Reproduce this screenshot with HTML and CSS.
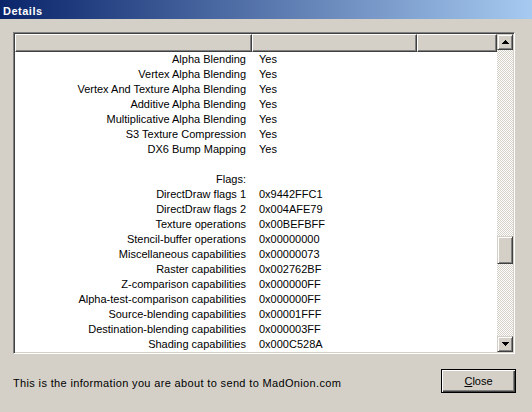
FILE: index.html
```html
<!DOCTYPE html>
<html>
<head>
<meta charset="utf-8">
<title>Details</title>
<link rel="stylesheet" href="styles.css">
</head>
<body>
<div class="window">
  <div class="titlebar"><span class="title">Details</span></div>
  <div class="listbox">
    <div class="listmain">
      <div class="header">
        <div class="hcell c1"></div>
        <div class="hcell c2"></div>
        <div class="hcell c3"></div>
      </div>
      <div class="rows">
        <div class="row"><span class="label">Alpha Blending</span><span class="value">Yes</span></div>
        <div class="row"><span class="label">Vertex Alpha Blending</span><span class="value">Yes</span></div>
        <div class="row"><span class="label">Vertex And Texture Alpha Blending</span><span class="value">Yes</span></div>
        <div class="row"><span class="label">Additive Alpha Blending</span><span class="value">Yes</span></div>
        <div class="row"><span class="label">Multiplicative Alpha Blending</span><span class="value">Yes</span></div>
        <div class="row"><span class="label">S3 Texture Compression</span><span class="value">Yes</span></div>
        <div class="row"><span class="label">DX6 Bump Mapping</span><span class="value">Yes</span></div>
        <div class="row"><span class="label"></span><span class="value"></span></div>
        <div class="row"><span class="label">Flags:</span><span class="value"></span></div>
        <div class="row"><span class="label">DirectDraw flags 1</span><span class="value">0x9442FFC1</span></div>
        <div class="row"><span class="label">DirectDraw flags 2</span><span class="value">0x004AFE79</span></div>
        <div class="row"><span class="label">Texture operations</span><span class="value">0x00BEFBFF</span></div>
        <div class="row"><span class="label">Stencil-buffer operations</span><span class="value">0x00000000</span></div>
        <div class="row"><span class="label">Miscellaneous capabilities</span><span class="value">0x00000073</span></div>
        <div class="row"><span class="label">Raster capabilities</span><span class="value">0x002762BF</span></div>
        <div class="row"><span class="label">Z-comparison capabilities</span><span class="value">0x000000FF</span></div>
        <div class="row"><span class="label">Alpha-test-comparison capabilities</span><span class="value">0x000000FF</span></div>
        <div class="row"><span class="label">Source-blending capabilities</span><span class="value">0x00001FFF</span></div>
        <div class="row"><span class="label">Destination-blending capabilities</span><span class="value">0x000003FF</span></div>
        <div class="row"><span class="label">Shading capabilities</span><span class="value">0x000C528A</span></div>
      </div>
    </div>
    <div class="scrollbar">
      <div class="sbtn">
        <svg width="7" height="4" viewBox="0 0 7 4" shape-rendering="crispEdges"><rect x="3" y="0" width="1" height="1"/><rect x="2" y="1" width="3" height="1"/><rect x="1" y="2" width="5" height="1"/><rect x="0" y="3" width="7" height="1"/></svg>
      </div>
      <div class="track">
        <div class="thumb"></div>
      </div>
      <div class="sbtn">
        <svg width="7" height="4" viewBox="0 0 7 4" shape-rendering="crispEdges"><rect x="0" y="0" width="7" height="1"/><rect x="1" y="1" width="5" height="1"/><rect x="2" y="2" width="3" height="1"/><rect x="3" y="3" width="1" height="1"/></svg>
      </div>
    </div>
  </div>
  <div class="footer">
    <span class="info">This is the information you are about to send to MadOnion.com</span>
    <button class="btn"><span class="ul">C</span>lose</button>
  </div>
</div>
</body>
</html>
```
FILE: styles.css
```css
html, body {
  margin: 0;
  padding: 0;
}
body {
  width: 532px;
  height: 412px;
  background: #d4d0c8;
  font-family: "Liberation Sans", Arial, sans-serif;
  font-size: 11px;
  color: #000;
  overflow: hidden;
}
.window {
  display: flex;
  flex-direction: column;
  height: 412px;
}
.titlebar {
  height: 19px;
  background: linear-gradient(to right, #0a246a, #a6caf0);
  display: flex;
  align-items: center;
  padding-left: 3px;
}
.title {
  color: #fff;
  font-weight: bold;
  font-size: 11px;
  letter-spacing: 0.5px;
  padding-top: 2px;
}
.listbox {
  margin: 13px 0 0 13px;
  width: 502px;
  height: 322px;
  box-sizing: border-box;
  border: 1px solid;
  border-color: #808080 #ffffff #ffffff #808080;
  box-shadow: inset 1px 1px #404040, inset -1px -1px #d4d0c8;
  padding: 1px;
  display: flex;
}
.listmain {
  width: 482px;
  background: #fff;
  display: flex;
  flex-direction: column;
}
.header {
  display: grid;
  grid-template-columns: 237px 165px 80px;
  height: 18px;
}
.hcell {
  background: #d4d0c8;
  box-sizing: border-box;
  border: 1px solid;
  border-color: #ffffff #404040 #404040 #ffffff;
  box-shadow: inset -1px -1px #808080;
}
.rows {
  display: flex;
  flex-direction: column;
}
.row {
  display: grid;
  grid-template-columns: 237px 245px;
  height: 15px;
  line-height: 15px;
  white-space: nowrap;
}
.label {
  text-align: right;
  padding-right: 6px;
}
.value {
  padding-left: 7px;
}
.scrollbar {
  width: 16px;
  display: flex;
  flex-direction: column;
}
.sbtn {
  width: 16px;
  height: 16px;
  box-sizing: border-box;
  background: #d4d0c8;
  border: 1px solid;
  border-color: #d4d0c8 #404040 #404040 #d4d0c8;
  box-shadow: inset 1px 1px #ffffff, inset -1px -1px #808080;
  display: flex;
  align-items: center;
  justify-content: center;
}
.sbtn svg {
  display: block;
  fill: #000;
}
.track {
  flex: 1;
  background: repeating-conic-gradient(#d4d0c8 0 25%, #ffffff 0 50%) 0 0 / 2px 2px;
  display: flex;
  flex-direction: column;
}
.thumb {
  margin-top: 186px;
  height: 28px;
  box-sizing: border-box;
  background: #d4d0c8;
  border: 1px solid;
  border-color: #d4d0c8 #404040 #404040 #d4d0c8;
  box-shadow: inset 1px 1px #ffffff, inset -1px -1px #808080;
}
.footer {
  display: flex;
  justify-content: space-between;
  align-items: center;
  margin-top: 15px;
  padding: 0 16px 0 13px;
}
.info {
  padding-top: 4px;
  letter-spacing: 0.35px;
}
.btn {
  width: 75px;
  height: 24px;
  box-sizing: border-box;
  background: #d4d0c8;
  border: 1px solid #000;
  box-shadow: inset 1px 1px #ffffff, inset -1px -1px #404040, inset -2px -2px #808080;
  font-family: "Liberation Sans", Arial, sans-serif;
  font-size: 11px;
  color: #000;
  padding: 0;
  margin: 0;
}
.ul {
  text-decoration: underline;
}
```
